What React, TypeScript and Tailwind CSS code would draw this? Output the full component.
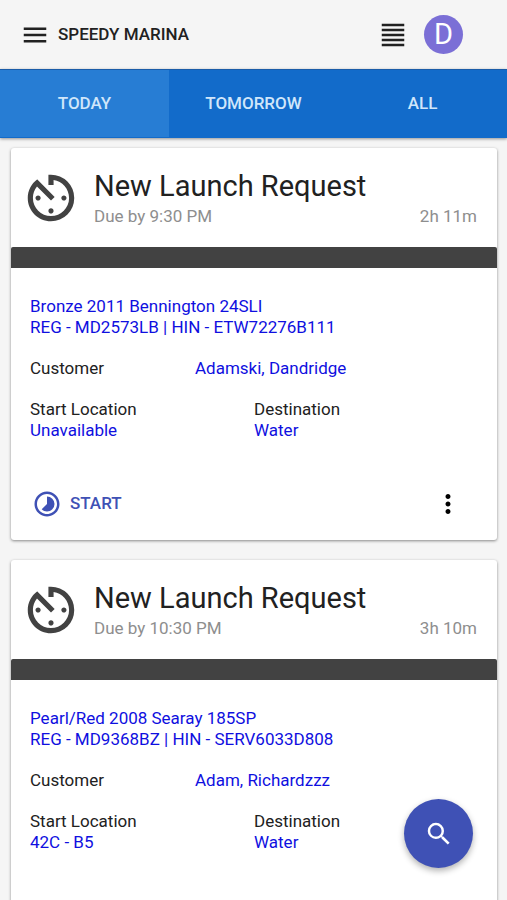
import React from "react";
import {
  MdAvTimer,
  MdFormatAlignJustify,
  MdMenu,
  MdMoreVert,
  MdSearch,
  MdTimelapse,
} from "react-icons/md";

const tabs = ["Today", "Tomorrow", "All"];

const requests = [
  {
    due: "9:30 PM",
    left: "2h 11m",
    boat: "Bronze 2011 Bennington 24SLI",
    reg: "REG - MD2573LB | HIN - ETW72276B111",
    customer: "Adamski, Dandridge",
    start: "Unavailable",
    destination: "Water",
  },
  {
    due: "10:30 PM",
    left: "3h 10m",
    boat: "Pearl/Red 2008 Searay 185SP",
    reg: "REG - MD9368BZ | HIN - SERV6033D808",
    customer: "Adam, Richardzzz",
    start: "42C - B5",
    destination: "Water",
  },
];

function Header() {
  return (
    <header className="flex h-[69px] shrink-0 items-center bg-[#f5f5f5] pr-11 pl-5">
      <button aria-label="Menu">
        <MdMenu className="text-[30px] text-[#212121]" />
      </button>
      <h1 className="ml-2 flex-1 text-[17px] font-medium text-[#212121]">
        SPEEDY MARINA
      </h1>
      <button aria-label="List view">
        <MdFormatAlignJustify className="text-[30px] text-[#212121]" />
      </button>
      <button className="ml-4 h-[39px] w-[39px] rounded-full bg-[#7b6fd6] text-[29px] leading-[39px] text-white">
        D
      </button>
    </header>
  );
}

function Tabs() {
  return (
    <nav className="z-10 grid h-[69px] shrink-0 grid-cols-3 border-t border-[#1a5ca8] bg-[#126bca] pb-px shadow-[0_1px_3px_rgba(0,0,0,0.4)]">
      {tabs.map((tab, i) => (
        <button
          key={tab}
          className={
            i === 0
              ? "bg-[#277dd4] text-[17px] font-medium text-[#d0e6fa] uppercase"
              : "text-[17px] font-medium text-[#d0e6fa] uppercase"
          }
        >
          {tab}
        </button>
      ))}
    </nav>
  );
}

function RequestCard({ item }: { item: (typeof requests)[number] }) {
  return (
    <article className="rounded-[3px] bg-white shadow-[0_1px_3px_rgba(0,0,0,0.45)]">
      <div className="flex h-[99px] items-center pr-5 pl-[9px]">
        <MdAvTimer className="shrink-0 text-[62px] text-[#424242]" />
        <div className="ml-3 flex-1">
          <h2 className="text-[29px] leading-[36px] text-[#212121]">
            New Launch Request
          </h2>
          <div className="flex justify-between text-[17px] leading-[24px] text-[#8e8e8e]">
            <p>Due by {item.due}</p>
            <p>{item.left}</p>
          </div>
        </div>
      </div>
      <div className="h-[21px] rounded-t-[2px] bg-[#424242]" />
      <div className="px-[19px] pt-[28px] text-[17px] leading-[21px] text-[#212121]">
        <a href="#" className="block text-[#0f0fe0]">
          {item.boat}
          <br />
          {item.reg}
        </a>
        <div className="mt-5 flex">
          <p className="w-[165px]">Customer</p>
          <a href="#" className="text-[#0f0fe0]">
            {item.customer}
          </a>
        </div>
        <div className="mt-5 grid grid-cols-2">
          <div>
            <p>Start Location</p>
            <a href="#" className="text-[#0f0fe0]">
              {item.start}
            </a>
          </div>
          <div>
            <p>Destination</p>
            <a href="#" className="text-[#0f0fe0]">
              {item.destination}
            </a>
          </div>
        </div>
      </div>
      <div className="mt-12 flex items-center justify-between pr-[34px] pb-[21px] pl-[21px]">
        <button className="flex items-center gap-2 text-[17px] font-medium text-[#3f51b5]">
          <MdTimelapse className="text-[30px]" />
          START
        </button>
        <button aria-label="More options">
          <MdMoreVert className="text-[30px] text-black" />
        </button>
      </div>
    </article>
  );
}

export default function App() {
  return (
    <div className="relative flex h-screen flex-col overflow-hidden bg-[#f5f5f5] font-['Roboto',sans-serif]">
      <Header />
      <Tabs />
      <main className="flex-1 space-y-5 overflow-y-auto py-[10px] pr-[10px] pl-[11px] [scrollbar-width:none]">
        {requests.map((item) => (
          <RequestCard key={item.reg} item={item} />
        ))}
      </main>
      <button
        aria-label="Search"
        className="absolute right-[34px] bottom-8 flex h-[69px] w-[69px] items-center justify-center rounded-full bg-[#3f51b5] shadow-[0_3px_6px_rgba(0,0,0,0.3)]"
      >
        <MdSearch className="text-[30px] text-white" />
      </button>
    </div>
  );
}
